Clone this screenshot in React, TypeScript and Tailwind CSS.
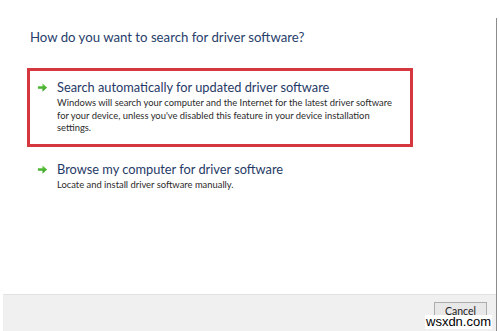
import React from 'react'

function GreenArrow() {
  return (
    <svg viewBox="0 0 12 12" className="h-[11px] w-[11px] shrink-0" aria-hidden="true">
      <defs>
        <linearGradient id="ga" x1="0" y1="0" x2="0" y2="1">
          <stop offset="0" stopColor="#6fcf4a" />
          <stop offset="1" stopColor="#2f9a1e" />
        </linearGradient>
      </defs>
      <path d="M1 4.6h5V1.5L11 6l-5 4.5V7.4H1Z" fill="url(#ga)" />
    </svg>
  )
}

function Option({
  title,
  children,
}: {
  title: string
  children: React.ReactNode
}) {
  return (
    <div className="flex items-start gap-[9px] pl-[7px]">
      <div className="pt-[3px]">
        <GreenArrow />
      </div>
      <div>
        <div className="whitespace-nowrap text-[12.8px] leading-[17px] text-[#1f3a66]">{title}</div>
        <div className="mt-[1px] whitespace-nowrap text-[9.4px] leading-[12.5px] text-[#2b2b2b]">
          {children}
        </div>
      </div>
    </div>
  )
}

export default function App() {
  return (
    <div
      className="relative h-[331px] w-[499px] overflow-hidden bg-white"
      style={{ fontFamily: 'Lato, "Open Sans", sans-serif' }}
    >
      <div className="mt-[18px] flex h-[313px] w-[497px] flex-col border-r border-[#8c8c8c]">
        <div className="flex-1 pl-[30px] pt-[11px]">
          <h1 className="text-[13.2px] leading-[16px] text-[#27406b]">
            How do you want to search for driver software?
          </h1>
          <div className="-ml-[3px] mt-[23px] h-[79px] w-[386px] border-[3px] border-[#d4373e] pt-[8px]">
            <Option title="Search automatically for updated driver software">
              Windows will search your computer and the Internet for the latest driver software
              <br />
              for your device, unless you've disabled this feature in your device installation
              <br />
              settings.
            </Option>
          </div>
          <div className="-ml-[3px] mt-[14px] pl-[3px]">
            <Option title="Browse my computer for driver software">
              Locate and install driver software manually.
            </Option>
          </div>
        </div>
        <div className="ml-[3px] flex h-[37px] justify-end border-t border-[#e2e2e2] bg-[#f0f0f0] pr-[9px] pt-[7px]">
          <button
            type="button"
            className="h-[24px] w-[53px] border border-[#adadad] bg-[#e8e8e8] text-[10.5px] leading-[16px] text-[#222]"
          >
            <span className="block -mt-[7px]">Cancel</span>
          </button>
        </div>
      </div>
      <div
        className="absolute left-[425px] top-[315px] bg-white px-[1px] text-[13px] leading-[14px] text-black"
        style={{ fontFamily: '"Liberation Sans", Arial, sans-serif' }}
      >
        wsxdn.com
      </div>
    </div>
  )
}
